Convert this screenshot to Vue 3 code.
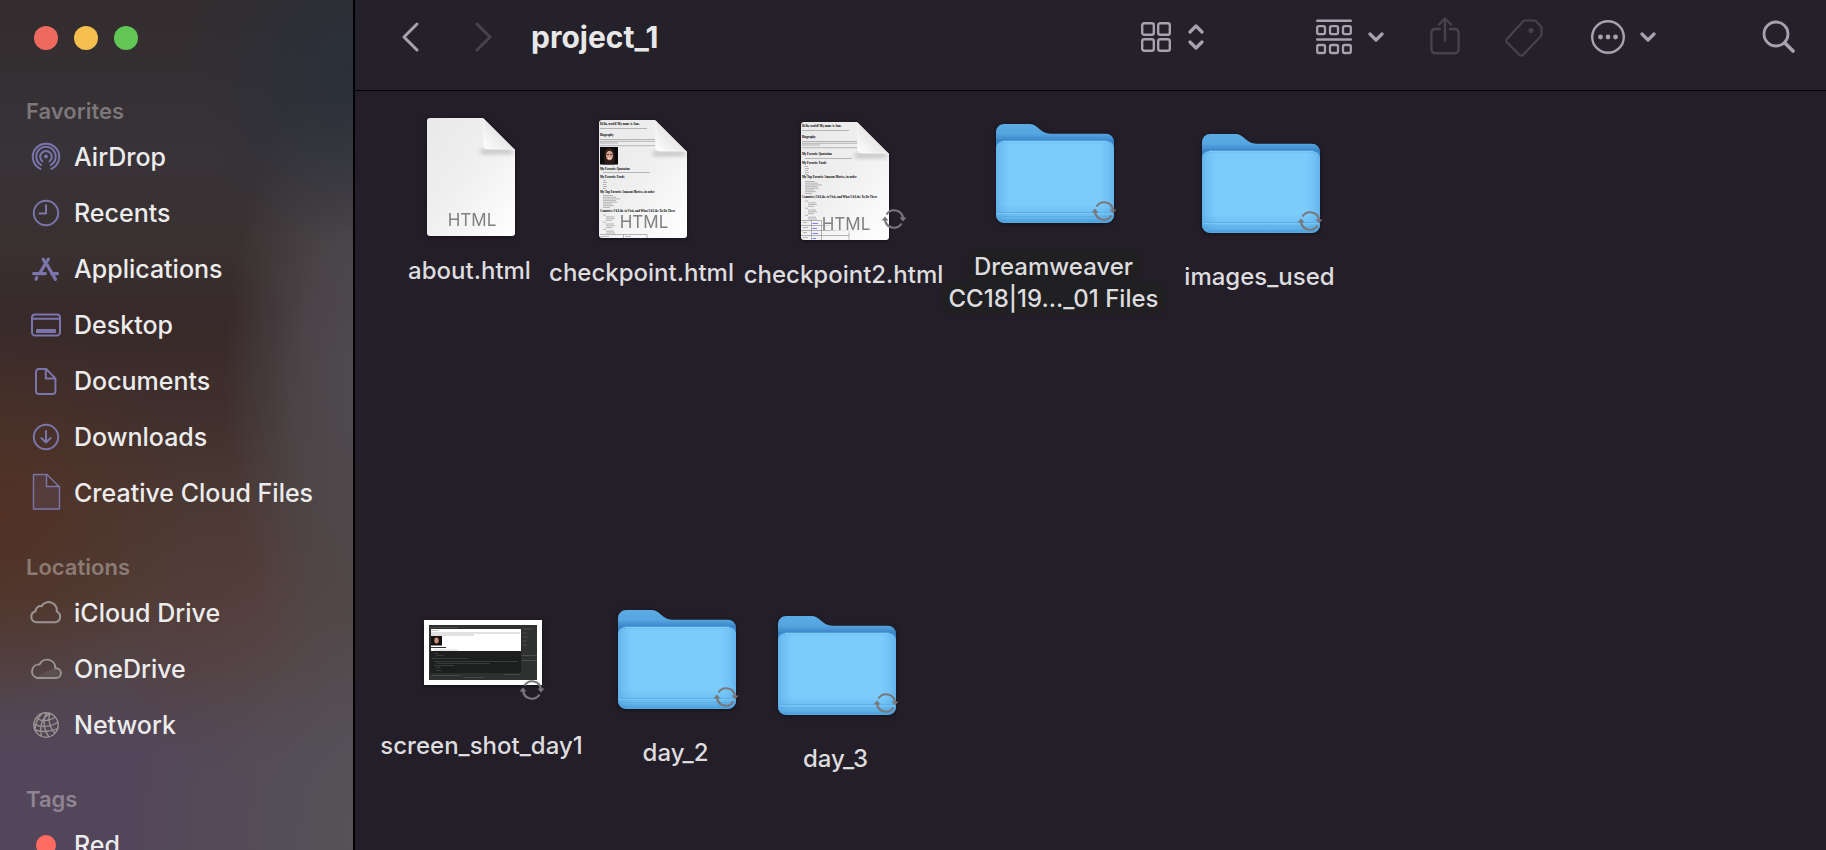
<script setup>
const sections = [
  {
    title: 'Favorites',
    tone: 'violet',
    items: [
      {
        label: 'AirDrop',
        stroke:
          'M10.6 27.9A13.2 13.2 0 1 1 21.4 27.9M11.2 24A9.7 9.7 0 1 1 20.8 24M12.4 20.3A5.8 5.8 0 1 1 19.6 20.3',
        fill: 'M18 15.6a2 2 0 1 1-4 0a2 2 0 1 1 4 0',
      },
      {
        label: 'Recents',
        stroke: 'M28.2 16a12.2 12.2 0 1 1-24.4 0a12.2 12.2 0 1 1 24.4 0M16 8.2V16.4H9.4',
      },
      {
        label: 'Applications',
        bold: 'M13.2 6.2L15 9.2M18.4 6.2L9.8 20.2M17.4 12.2L25.4 26.4M3.6 20.6H15.4M21.6 20.6H27.4M6.8 24.6L6 26.2',
      },
      {
        label: 'Desktop',
        stroke:
          'M5 5.5H27a3 3 0 0 1 3 3V23.5a3 3 0 0 1-3 3H5a3 3 0 0 1-3-3V8.5a3 3 0 0 1 3-3zM2 9.7H30',
        fill: 'M7 20H25a1 1 0 0 1 1 1V23a1 1 0 0 1-1 1H7a1 1 0 0 1-1-1V21a1 1 0 0 1 1-1z',
      },
      {
        label: 'Documents',
        stroke:
          'M8.6 4H16.2L25.4 13.4V26.4a2.6 2.6 0 0 1-2.6 2.6H8.6A2.6 2.6 0 0 1 6 26.4V6.6A2.6 2.6 0 0 1 8.6 4zM15.8 4V13.6H25.4',
      },
      {
        label: 'Downloads',
        stroke:
          'M28.2 16a12.2 12.2 0 1 1-24.4 0a12.2 12.2 0 1 1 24.4 0M16 10V21.4M11.4 17L16 21.6L20.6 17',
      },
      {
        label: 'Creative Cloud Files',
        thin: 'M3.5 -2.5H17L29.5 10V32H3.5zM16.5 -2.5V9.5H29.5',
        shade: 'M3.5 -2.5H17V9.5H29.5V32H3.5z',
      },
    ],
  },
  {
    title: 'Locations',
    tone: 'gray',
    items: [
      {
        label: 'iCloud Drive',
        stroke:
          'M6.2 25.2H25.6A5.6 5.6 0 0 0 26.8 14.6A8.2 8.2 0 0 0 11.6 9.2A5 5 0 0 0 5.6 14.2A5.6 5.6 0 0 0 6.2 25.2z',
      },
      {
        label: 'OneDrive',
        stroke:
          'M6.8 25H26A4.9 4.9 0 0 0 26 15.2H25.4A8.3 8.3 0 0 0 9.6 11.4A7 7 0 0 0 6.8 25z',
        shade: 'M5 25L18 17.5L25.4 15.2L30 20L26 25z',
      },
      {
        label: 'Network',
        thin:
          'M28.2 16a12.2 12.2 0 1 1-24.4 0a12.2 12.2 0 1 1 24.4 0M20 4.5C13 8 9 16 11.5 27.3M17 4C12 9 14 22 19 27.8M19.5 4.3C18 11 20 20 25 24M12 4.6C8 9 5.6 12 5 21M6 9C12 13 19 12 25 8.5M4 15C11 19 21 18 28 13M5 21C12 23 21 23 27.5 19.5',
      },
    ],
  },
  {
    title: 'Tags',
    tone: 'red',
    items: [{ label: 'Red', fill: 'M26 16a10 10 0 1 1-20 0a10 10 0 1 1 20 0' }],
  },
]

// x / y is where the centre of the icon has been dropped on the window's canvas
const files = [
  { kind: 'page', lines: ['about.html'], x: 471, y: 177 },
  { kind: 'page', lines: ['checkpoint.html'], x: 643, y: 179, preview: true, photo: true },
  { kind: 'page', lines: ['checkpoint2.html'], x: 845, y: 181, preview: true, sync: true },
  { kind: 'folder', lines: ['Dreamweaver', 'CC18|19..._01 Files'], x: 1055, y: 173, sync: true, marked: true },
  { kind: 'folder', lines: ['images_used'], x: 1261, y: 183, sync: true },
  { kind: 'shot', lines: ['screen_shot_day1'], x: 483, y: 652, sync: true },
  { kind: 'folder', lines: ['day_2'], x: 677, y: 659, sync: true },
  { kind: 'folder', lines: ['day_3'], x: 837, y: 665, sync: true },
]
const place = (f) => ({ left: f.x - 355 + 'px', top: f.y - 91 + 'px' })

const heads = (photo) => [
  [5, 'Hello, world! My name is Jane.'],
  [16, 'Biography'],
  [photo ? 50 : 33, 'My Favorite Quotation'],
  [photo ? 58 : 42, 'My Favorite Foods'],
  [photo ? 73 : 56, 'My Top Favorite Amazon Movies, in order'],
  [photo ? 92 : 76, "Countries I'd Like to Visit, and What I'd Like To Do There"],
]
const bullets = (photo) => {
  const s = photo ? 0 : -16
  const out = []
  for (let i = 0; i < 5; i++) out.push([4, 60.5 + s + i * 2, 3 + (i % 2)])
  for (let i = 0; i < 8; i++) out.push([4, 75.5 + s + i * 1.7, [10, 13, 17, 13, 14, 9, 11, 7][i]])
  for (let i = 0; i < 11; i++) out.push([i % 4 ? 7 : 4, 95 + s + i * 1.8, [3, 8, 9, 6][i % 4]])
  return out
}
</script>

<template>
  <div class="window">
    <aside class="sidebar">
      <div class="lights">
        <button class="light close" aria-label="Close"></button>
        <button class="light minimize" aria-label="Minimize"></button>
        <button class="light zoom" aria-label="Zoom"></button>
      </div>
      <nav v-for="s in sections" :key="s.title" :class="['section', s.tone]">
        <h2>{{ s.title }}</h2>
        <a v-for="i in s.items" :key="i.label" href="#" class="place">
          <svg class="glyph" viewBox="0 0 32 32" aria-hidden="true">
            <path v-if="i.shade" class="shade" :d="i.shade" />
            <path v-if="i.stroke" class="stroke" :d="i.stroke" />
            <path v-if="i.thin" class="stroke thin" :d="i.thin" />
            <path v-if="i.bold" class="stroke bold" :d="i.bold" />
            <path v-if="i.fill" class="fill" :d="i.fill" />
          </svg>
          <span>{{ i.label }}</span>
        </a>
      </nav>
    </aside>

    <main class="main">
      <header class="toolbar">
        <button class="tool" aria-label="Back">
          <svg width="18" height="30" viewBox="0 0 18 30"><path d="M16 2L3 15L16 28" stroke-width="3" /></svg>
        </button>
        <button class="tool forward dim" aria-label="Forward" disabled>
          <svg width="18" height="30" viewBox="0 0 18 30"><path d="M2 2L15 15L2 28" stroke-width="3" /></svg>
        </button>
        <h1>project_1</h1>

        <button class="tool view" aria-label="View as icons">
          <svg width="30" height="30" viewBox="0 0 30 30">
            <g stroke-width="2.4">
              <rect x="1.2" y="1.2" width="11.6" height="11.6" rx="2" /><rect x="17.2" y="1.2" width="11.6" height="11.6" rx="2" />
              <rect x="1.2" y="17.2" width="11.6" height="11.6" rx="2" /><rect x="17.2" y="17.2" width="11.6" height="11.6" rx="2" />
            </g>
          </svg>
          <svg width="16" height="28" viewBox="0 0 16 28"><path d="M2 9L8 3L14 9M2 19L8 25L14 19" stroke-width="3.2" /></svg>
        </button>
        <button class="tool group" aria-label="Group">
          <svg width="36" height="36" viewBox="0 0 36 36">
            <path d="M1.2 1.7H34.8M1.2 20.5H34.8" stroke-width="2.4" />
            <g stroke-width="2.3">
              <rect x="1.2" y="7.2" width="7.8" height="8" rx="1.6" /><rect x="14" y="7.2" width="8" height="8" rx="1.6" /><rect x="27" y="7.2" width="7.8" height="8" rx="1.6" />
              <rect x="1.2" y="26" width="7.8" height="8" rx="1.6" /><rect x="14" y="26" width="8" height="8" rx="1.6" /><rect x="27" y="26" width="7.8" height="8" rx="1.6" />
            </g>
          </svg>
          <svg width="16" height="10" viewBox="0 0 16 10"><path d="M2 2L8 8L14 2" stroke-width="3.2" /></svg>
        </button>
        <button class="tool share dim" aria-label="Share" disabled>
          <svg width="30" height="40" viewBox="0 0 30 40">
            <path d="M10 12H5a3.6 3.6 0 0 0-3.6 3.6V32.6A3.6 3.6 0 0 0 5 36.2H25a3.6 3.6 0 0 0 3.6-3.6V15.6A3.6 3.6 0 0 0 25 12H20M15 23.5V2M9 7.5L15 1.5L21 7.5" stroke-width="2.4" />
          </svg>
        </button>
        <button class="tool tag dim" aria-label="Edit tags" disabled>
          <svg width="38" height="40" viewBox="0 0 38 40">
            <path d="M20 3.5H29a3 3 0 0 1 2 .8L35.5 9a3 3 0 0 1 1 2.2V17a3.6 3.6 0 0 1-1 2.6L18 38a2.4 2.4 0 0 1-3.4 0L2 25.5a2.4 2.4 0 0 1 0-3.600L18 4.500a3 3 0 0 1 2-1z" stroke-width="2.2" />
            <circle class="solid" cx="26" cy="13.5" r="2.5" />
          </svg>
        </button>
        <button class="tool more" aria-label="More actions">
          <svg width="34" height="34" viewBox="0 0 34 34">
            <circle cx="17" cy="17" r="15.8" stroke-width="2.4" />
            <g class="solid"><circle cx="9.5" cy="17" r="2.4" /><circle cx="17" cy="17" r="2.4" /><circle cx="24.5" cy="17" r="2.4" /></g>
          </svg>
          <svg width="16" height="10" viewBox="0 0 16 10"><path d="M2 2L8 8L14 2" stroke-width="3.2" /></svg>
        </button>
        <button class="tool search" aria-label="Search">
          <svg width="34" height="34" viewBox="0 0 34 34">
            <circle cx="14" cy="14" r="12" stroke-width="2.8" />
            <path d="M23 23L31 31" stroke-width="3.8" />
          </svg>
        </button>
      </header>

      <section class="canvas">
        <button v-for="f in files" :key="f.lines[0]" class="file" :style="place(f)">
          <span class="art">
            <svg v-if="f.kind === 'page'" class="page" width="88" height="118" viewBox="0 0 88 118">
              <defs>
                <linearGradient id="paper" x1="0" y1="0" x2="1" y2="1">
                  <stop offset="0" stop-color="#e9e9e9" /><stop offset=".45" stop-color="#efefef" /><stop offset="1" stop-color="#ffffff" />
                </linearGradient>
                <linearGradient id="curl" x1="0" y1="1" x2=".6" y2=".4">
                  <stop offset="0" stop-color="#ffffff" /><stop offset="1" stop-color="#e2e2e2" />
                </linearGradient>
                <radialGradient id="wash">
                  <stop offset="0" stop-color="#f6f6f6" /><stop offset=".6" stop-color="#f6f6f6" stop-opacity=".9" /><stop offset="1" stop-color="#f6f6f6" stop-opacity="0" />
                </radialGradient>
                <filter id="curlShadow" x="-50%" y="-50%" width="200%" height="200%"><feGaussianBlur stdDeviation="2.5" /></filter>
                <clipPath id="sheet"><path d="M3 0H56L88 32V115a3 3 0 0 1-3 3H3a3 3 0 0 1-3-3V3a3 3 0 0 1 3-3z" /></clipPath>
              </defs>
              <g clip-path="url(#sheet)">
                <rect width="88" height="118" fill="url(#paper)" />
                <g v-if="f.preview">
                  <text v-for="h in heads(f.photo)" :key="h[1]" class="head" x="1" :y="h[0]">{{ h[1] }}</text>
                  <path class="faint" d="M1 8.5H48M1 19.5H56M1 21.3H56M1 23H19M1 25.7H56" />
                  <path v-if="f.photo" class="faint" d="M4 52.5H51" />
                  <path v-else class="faint" d="M4 36.5H51" />
                  <path v-for="(b, n) in bullets(f.photo)" :key="n" class="faint" :d="`M${b[0]} ${b[1]}h${b[2]}`" />
                  <g v-if="f.photo">
                    <rect x="1" y="27" width="18" height="17.5" fill="#0c0b0b" />
                    <path d="M4 44.5q2-4 6-4q4 0 6 4z" fill="#251d1f" />
                    <path d="M5.5 34q0-6 5-6t5 6l.5 8h-11z" fill="#2c1b16" />
                    <ellipse cx="10.5" cy="35.5" rx="3.5" ry="4.800" fill="#d3a18a" />
                    <path d="M7.5 34.5h2.5m1 0h2.5" stroke="#33241f" stroke-width=".8" />
                    <path d="M9 38.200h3" stroke="#f5e6df" />
                    <path d="M1 114.5H48V118M24.5 114.5V118" class="rule" />
                    <path class="faint" d="M2 116.5H10M26 116.5H32" />
                  </g>
                  <g v-else>
                    <path class="rule" d="M0 98.5H20M0 103.5H48M0 108.5H48M0 113.5H48M48 108V118M10.5 98V118M20.5 98V118" />
                    <path class="faint" d="M2 100.5H6M2 105.5H7M2 110.5H6M2 115.5H7" />
                    <path d="M11.5 101.5H17M11.5 106.5H16M11.5 111.500H17M11.5 116.500H15" stroke="#7d80ef" />
                    <ellipse cx="46" cy="102" rx="27" ry="10" fill="url(#wash)" />
                  </g>
                </g>
                <path d="M54 -2V32H84L88 35H54z" fill="#000" opacity=".32" filter="url(#curlShadow)" />
                <path d="M57 0V28a3 3 0 0 0 3 3H88V32L57 0z" fill="url(#curl)" stroke="#fff" stroke-width=".6" />
              </g>
              <text class="type" x="45" y="108">HTML</text>
            </svg>

            <svg v-else-if="f.kind === 'folder'" class="folder" width="118" height="99" viewBox="0 0 118 99">
              <defs>
                <linearGradient id="back" x1="0" y1="0" x2="0" y2="1">
                  <stop offset="0" stop-color="#5babe4" /><stop offset=".1" stop-color="#55a5e0" /><stop offset=".17" stop-color="#3a84c8" /><stop offset="1" stop-color="#4c9edb" />
                </linearGradient>
                <linearGradient id="front" x1="0" y1="0" x2="1" y2="0">
                  <stop offset="0" stop-color="#62b4eb" /><stop offset=".05" stop-color="#71c1f4" /><stop offset=".12" stop-color="#7bccfb" /><stop offset=".88" stop-color="#7bccfb" /><stop offset=".95" stop-color="#71c1f4" /><stop offset="1" stop-color="#62b4eb" />
                </linearGradient>
                <linearGradient id="hem" x1="0" y1="0" x2="0" y2="1">
                  <stop offset="0" stop-color="#4597d6" stop-opacity=".25" /><stop offset=".04" stop-color="#4597d6" stop-opacity="0" /><stop offset=".78" stop-color="#4597d6" stop-opacity="0" /><stop offset=".93" stop-color="#4597d6" stop-opacity=".35" /><stop offset="1" stop-color="#4597d6" stop-opacity=".9" />
                </linearGradient>
              </defs>
              <path fill="url(#back)" d="M8 0H34C39 0 42 4 46 7C49 9 51 9.7 55 9.7H110a8 8 0 0 1 8 8V91a8 8 0 0 1-8 8H8a8 8 0 0 1-8-8V8a8 8 0 0 1 8-8z" />
              <path fill="url(#front)" d="M8 17H110a8 8 0 0 1 8 6V91a8 8 0 0 1-8 7.5H8A8 8 0 0 1 0 91V23a8 8 0 0 1 8-6z" />
              <path fill="url(#hem)" d="M8 17H110a8 8 0 0 1 8 6V91a8 8 0 0 1-8 7.5H8A8 8 0 0 1 0 91V23a8 8 0 0 1 8-6z" />
              <path d="M7 17.2H111" stroke="#93d6fb" stroke-width=".8" />
              <path d="M1 88.5H117M1 92.5H117" stroke="#58abe4" stroke-width=".8" />
              <path d="M1 89.5H117" stroke="#83cdf8" stroke-width=".6" />
            </svg>

            <svg v-else class="shot" width="118" height="65" viewBox="0 0 118 65">
              <rect width="118" height="65" fill="#fff" />
              <rect x="5" y="5" width="108" height="55" fill="#2f3030" />
              <rect x="6" y="31" width="91" height="22" fill="#1d1f1f" />
              <rect x="7" y="9" width="90" height="22" fill="#fff" />
              <path d="M7 10.5H14M7 13H96M7 15H50" stroke="#aaa" stroke-width=".7" />
              <path d="M7 27.5H22" stroke="#333" />
              <path d="M10 30H34" stroke="#bbb" stroke-width=".6" />
              <rect x="7" y="16" width="11" height="9.5" fill="#14100f" />
              <ellipse cx="12.5" cy="20.5" rx="2.2" ry="3" fill="#c58f77" />
              <path d="M10 33.5H14M12 35.5H20M8 38.5H44M10 41.5H94M12 43.5H66M10 45.5H30M12 47.5H16M12 50.5H17" stroke="#454b47" stroke-width=".7" />
              <path d="M8 55.5H36M40 57.5H60M6 7.5H34M80 54.5H96" stroke="#555" stroke-width=".7" />
              <path d="M99 9H108M99 13H103M99 17H104M99 21H102M99 25H103M98 35.5H113M98 40.5H113" stroke="#555" stroke-width=".8" />
            </svg>

            <svg v-if="f.sync" class="sync" width="26" height="22" viewBox="0 0 26 22" aria-hidden="true">
              <path d="M5.500 6.500A9 9 0 0 1 22 10M20.500 15.500A9 9 0 0 1 4 12" />
              <path class="tip" d="M18.500 9.500H25.500L22 13.500zM.5 12.500H7.500L4 8.500z" />
            </svg>
          </span>
          <span :class="['label', { marked: f.marked }]">
            <span v-for="l in f.lines" :key="l">{{ l }}</span>
          </span>
        </button>
      </section>
    </main>
  </div>
</template>

<style>
html,
body {
  margin: 0;
  background: #241e29;
}
</style>

<style scoped>
.window {
  display: flex;
  height: 100vh;
  overflow: hidden;
  font-family: Inter, "Liberation Sans", sans-serif;
  color: #ececec;
}
button {
  padding: 0;
  border: 0;
  background: none;
  font: inherit;
  color: inherit;
}
.sidebar {
  flex: none;
  width: 353px;
  overflow: hidden;
  border-right: 2px solid #000;
  background:
    radial-gradient(ellipse 170px 180px at 100% 8%, #2a303a 0%, rgba(42, 48, 58, 0) 100%),
    radial-gradient(ellipse 140px 330px at 103% 45%, #504c51 0%, rgba(80, 76, 81, 0.75) 45%, rgba(80, 76, 81, 0) 100%),
    radial-gradient(ellipse 250px 320px at 108% 98%, #555356 10%, rgba(85, 83, 86, 0) 100%),
    radial-gradient(ellipse 140px 150px at 72% 75%, rgba(86, 58, 58, 0.6) 0%, rgba(86, 58, 58, 0) 100%),
    radial-gradient(ellipse 190px 190px at 0% 61%, rgba(82, 48, 34, 0.85) 0%, rgba(82, 48, 34, 0) 100%),
    linear-gradient(#322c2e 0%, #383338 18%, #39302f 30%, #38292a 37%, #3f2f2c 48%, #4a3833 58%, #503e38 70%, #52454b 80%, #53465a 88%, #53465a 100%);
}
.lights {
  display: flex;
  gap: 16px;
  padding: 26px 34px 15px;
}
.light {
  width: 24px;
  height: 24px;
  border-radius: 50%;
}
.close { background: #ee6a5f; }
.minimize { background: #f5bf4f; }
.zoom { background: #62c655; }
.section h2 {
  margin: 0;
  padding: 28px 26px 0;
  font-size: 22px;
  line-height: 36px;
  font-weight: 600;
  color: rgba(255, 255, 255, 0.34);
}
.place {
  display: flex;
  align-items: center;
  gap: 12px;
  height: 56px;
  padding-left: 30px;
  font-size: 25px;
  font-weight: 500;
  color: #ececec;
  text-decoration: none;
  white-space: nowrap;
}
.glyph {
  flex: none;
  width: 32px;
  height: 32px;
  overflow: visible;
  color: #7a75ab;
}
.gray .glyph { color: #9a9492; }
.red .glyph { color: #ff6a61; }
.stroke {
  fill: none;
  stroke: currentColor;
  stroke-width: 2;
  stroke-linecap: round;
  stroke-linejoin: round;
}
.thin { stroke-width: 1.4; }
.bold { stroke-width: 3.2; }
.fill { fill: currentColor; }
.shade { fill: currentColor; opacity: 0.16; }

.main {
  flex: 1;
  min-width: 0;
  display: flex;
  flex-direction: column;
  background: #241e29;
}
.toolbar {
  flex: none;
  display: flex;
  align-items: center;
  height: 74px;
  padding: 0 30px 16px 46px;
  border-bottom: 1px solid #000;
  background: #24212a;
}
.tool {
  display: flex;
  align-items: center;
  flex: none;
  color: #a7a2ae;
}
.tool svg {
  display: block;
  fill: none;
  stroke: currentColor;
  stroke-linecap: round;
  stroke-linejoin: round;
}
.tool .solid {
  fill: currentColor;
  stroke: none;
}
.dim,
.dim:disabled { color: #47434d; }
.forward { margin-left: 56px; }
h1 {
  flex: 1;
  margin: 0 0 0 38px;
  font-size: 30px;
  line-height: 36px;
  font-weight: 700;
  color: #e8e8e8;
}
.view { gap: 17px; }
.group { gap: 16px; margin-left: 112px; }
.share { margin-left: 46px; }
.tag { margin-left: 45px; }
.more { gap: 15px; margin-left: 48px; }
.search { margin-left: 106px; }

.canvas {
  position: relative;
  flex: 1;
}
.file {
  position: absolute;
  display: flex;
  flex-direction: column;
  align-items: center;
  gap: 14px;
  margin: -64px 0 0 -120px;
  width: 240px;
}
.art {
  position: relative;
  display: flex;
  align-items: center;
  justify-content: center;
  width: 128px;
  height: 128px;
}
.page,
.folder,
.shot {
  filter: drop-shadow(0 1px 2px rgba(0, 0, 0, 0.5));
}
.head {
  font: bold 3px "Liberation Serif", serif;
  fill: #000;
}
.faint {
  fill: none;
  stroke: #666;
  stroke-width: 0.7;
  opacity: 0.6;
}
.rule {
  fill: none;
  stroke: #888;
  stroke-width: 0.6;
}
.type {
  font: 17px Inter, sans-serif;
  fill: #808080;
  text-anchor: middle;
}
.sync {
  position: absolute;
  right: 2px;
  bottom: 15px;
  fill: none;
  stroke: #78787c;
  stroke-width: 2.2;
}
.sync .tip {
  fill: #78787c;
  stroke: none;
}
.label {
  display: flex;
  flex-direction: column;
  align-items: center;
  padding-right: 3px;
  font-size: 24px;
  line-height: 32px;
  font-weight: 450;
  color: #dddcde;
  white-space: nowrap;
}
.marked span {
  padding: 0 7px;
  border-radius: 8px;
  background: #201f21;
}
</style>
